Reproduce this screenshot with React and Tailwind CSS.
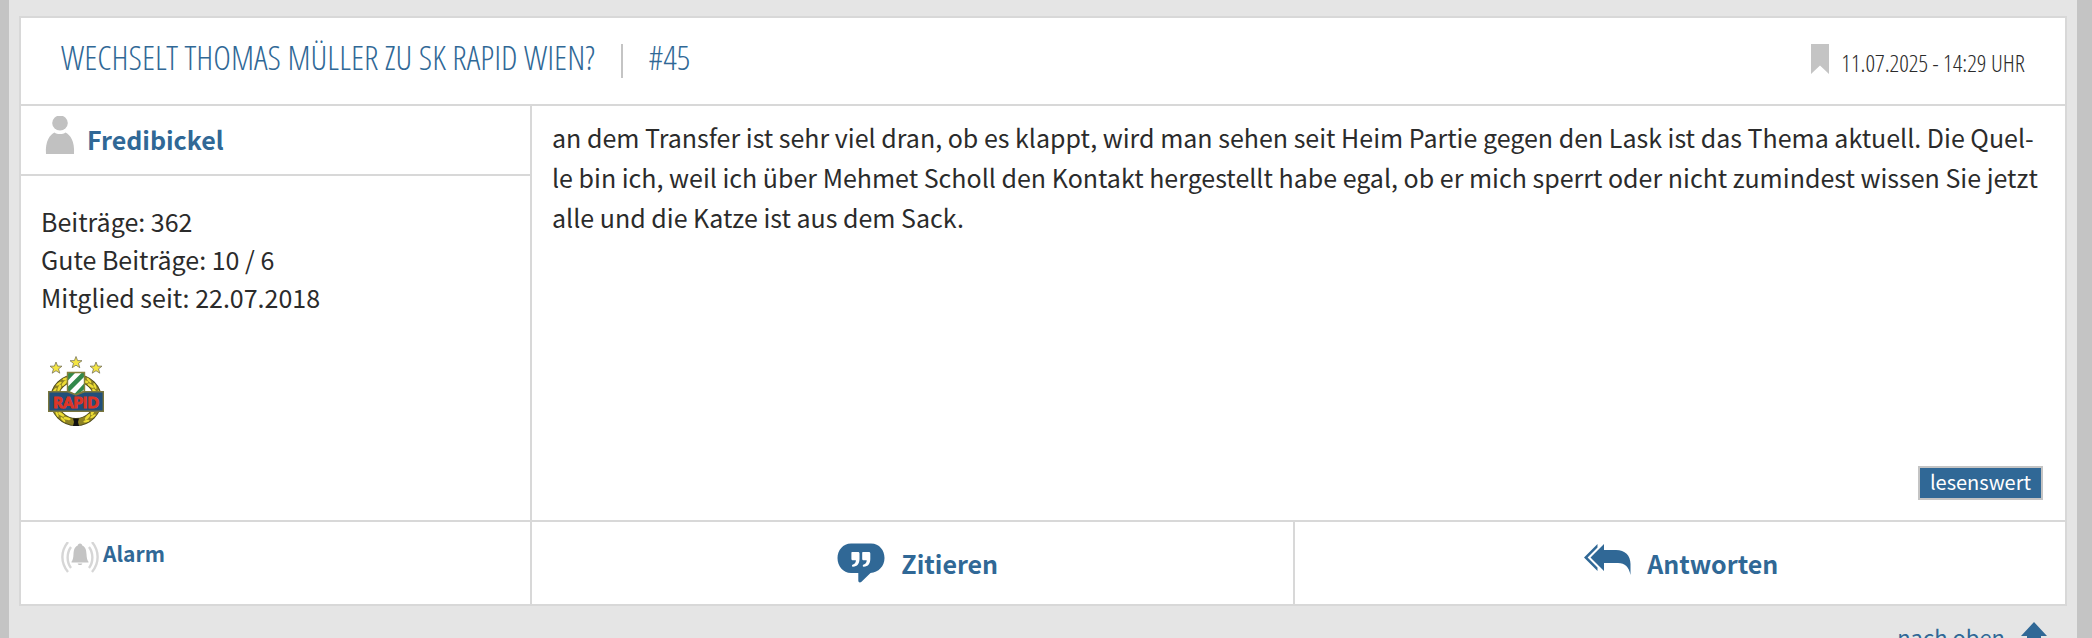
const stats = ["Beiträge: 362", "Gute Beiträge: 10 / 6", "Mitglied seit: 22.07.2018"];

const STAR = "M0 -6 L1.6 -1.9 L6 -1.8 L2.5 0.9 L3.8 5.2 L0 2.7 L-3.8 5.2 L-2.5 0.9 L-6 -1.8 L-1.6 -1.9 Z";

const leaves = [-150, -130, -110, -90, -70, -50, -30, -10, 10, 30, 50, 70, 90, 110, 130, 150];

const BookmarkIcon = () => (
  <svg className="h-[30px] w-[18px]" viewBox="0 0 18 30" aria-hidden="true">
    <path d="M0 0H18V30L9 21.500L0 30Z" fill="#c4c4c4" />
  </svg>
);

const PersonIcon = () => (
  <svg className="h-[38px] w-[30px]" viewBox="0 0 30 38" aria-hidden="true">
    <ellipse cx="15" cy="7" rx="7.800" ry="7.500" fill="#c1c1c1" />
    <path d="M1 38C0 25 5 18.500 9.500 16.500C12 18.500 18 18.500 20.500 16.500C25 18.500 30 25 29 38Z" fill="#c1c1c1" />
  </svg>
);

const AlarmIcon = () => (
  <svg className="h-[31px] w-[38px]" viewBox="0 0 38 31" fill="none" aria-hidden="true">
    <path
      d="M19 1.500C20.500 1.500 21.200 2.600 21.500 3.700C25 5 25.300 9 25.500 12C25.700 16 26.200 18 27.500 19.800V20.500H10.500V19.800C11.800 18 12.300 16 12.500 12C12.700 9 13 5 16.500 3.700C16.800 2.600 17.500 1.500 19 1.500ZM16.700 21.500H21.300C21 23.600 17 23.600 16.700 21.500Z"
      fill="#c4c4c4"
    />
    <g stroke="#d6d6d6" strokeWidth="2.400">
      <path d="M10 5C5.500 11 5.500 20 10 26" />
      <path d="M7 0C-0.500 9 -0.500 21 7 30" />
      <path d="M28 5C32.500 11 32.500 20 28 26" />
      <path d="M31 0C38.500 9 38.500 21 31 30" />
    </g>
  </svg>
);

const QuoteIcon = () => (
  <svg className="h-10 w-12" viewBox="0 0 48 40" aria-hidden="true">
    <path
      d="M14 0.500H34C42.500 0.500 47.500 7.500 47.500 15C47.500 23 41.500 29.500 33.500 30L24.500 38.800C23 40 21.300 39.500 21.300 37.500V30H14C6 30 0.500 23 0.500 15C0.500 7.500 6 0.500 14 0.500Z"
      fill="#306896"
    />
    <path
      d="M15.300 9H21C22 9 22.500 9.600 22.500 10.500V16C22.500 20.500 20.500 23.500 16 23.800C14.600 23.900 14.600 21.900 15.900 21.500C17.800 20.900 18.900 19.500 18.900 17.200H16C15 17.200 14.400 16.700 14.400 15.700V10.300C14.400 9.500 14.600 9 15.300 9Z"
      fill="#fff"
    />
    <path
      d="M26.100 9H31.800C32.800 9 33.300 9.600 33.300 10.500V16C33.300 20.500 31.300 23.500 26.800 23.800C25.400 23.900 25.400 21.900 26.700 21.500C28.600 20.900 29.700 19.500 29.700 17.200H26.800C25.800 17.200 25.200 16.700 25.200 15.700V10.300C25.200 9.500 25.400 9 26.100 9Z"
      fill="#fff"
    />
  </svg>
);

const ReplyIcon = () => (
  <svg className="mb-1.5 h-8 w-[47px]" viewBox="0 0 47 32" fill="#306896" aria-hidden="true">
    <path d="M13.500 0V3.500L3.600 13.500L13.500 23.500V27L0 13.500Z" />
    <path d="M20 0V6H32C41 6 46.500 11.500 46.500 20V31C45 23 41 19 34 19H20V27L6.500 13.500Z" />
  </svg>
);

const UpIcon = () => (
  <svg className="h-8 w-[26px]" viewBox="0 0 26 32" aria-hidden="true">
    <path d="M13 0L26 14H20V28H6V14H0Z" fill="#306896" />
  </svg>
);

const RapidLogo = () => (
  <svg className="h-[70px] w-14" viewBox="0 0 56 70" role="img" aria-label="SK Rapid Wien">
    <g fill="#f4e544" stroke="#77745a" strokeWidth="0.8">
      <path d={STAR} transform="translate(8 12)" />
      <path d={STAR} transform="translate(28 6.500)" />
      <path d={STAR} transform="translate(48 12)" />
    </g>
    <circle cx="28" cy="44" r="22" fill="none" stroke="#4f4b1c" strokeWidth="8" />
    <circle cx="28" cy="44" r="22" fill="none" stroke="#8d8223" strokeWidth="6.500" />
    <g fill="#ecdc35">
      {leaves.map((angle) => (
        <g key={angle} transform={`rotate(${angle} 28 44)`}>
          <ellipse cx="26.500" cy="23.500" rx="3.600" ry="1.400" transform="rotate(-18 26.500 23.500)" />
          <ellipse cx="29.500" cy="20.500" rx="3.200" ry="1.100" transform="rotate(18 29.500 20.500)" />
        </g>
      ))}
    </g>
    <path d="M25 62.500H31L30 66L31 70H25L26 66Z" fill="#111" />
    <path d="M19.500 16.500H36.500V35L28 39L19.500 35Z" fill="#fff" />
    <path d="M19.500 25V18L21 16.500H27.500ZM19.500 35V31L34 16.500H36.500V20.500L21 36ZM26 38.500L36.500 27V33L31 37.800L28 39Z" fill="#33894b" />
    <path d="M19.500 16.500H36.500V35L28 39L19.500 35Z" fill="none" stroke="#85803b" strokeWidth="1.400" />
    <path d="M0.700 35.700H19L28 39L37 35.700H55.300V55.300H0.700Z" fill="#214f7a" stroke="#7a763d" strokeWidth="1.400" />
    <text
      x="28"
      y="51.500"
      textAnchor="middle"
      className="fill-[#dd3526] stroke-[#dd3526] stroke-1 font-['Lato',sans-serif] text-[15px] font-black"
    >
      RAPID
    </text>
  </svg>
);

export default function App() {
  return (
    <div className="h-screen overflow-hidden border-r-[15px] border-l-[9px] border-[#c4c4c4] bg-[#e5e5e5] px-2.5 pt-4 font-['Noto_Sans_CJK_SC',sans-serif] text-[25px] text-[#2b2b2b]">
      <article className="border-2 border-[#d8d8d8] bg-white">
        <header className="flex h-[88px] items-start justify-between border-b-2 border-[#d8d8d8] px-10 font-['Open_Sans_Condensed_Light','Open_Sans_Condensed','Liberation_Sans_Narrow',sans-serif] font-light">
          <h1 className="flex items-start pt-5 text-[34px] leading-[38px] text-[#306896]">
            <a href="#thread">WECHSELT THOMAS MÜLLER ZU SK RAPID WIEN?</a>
            <span className="mx-[26px] mt-1.5 h-[34px] w-0.5 bg-[#c4c4c4]" />
            <a href="#45">#45</a>
          </h1>
          <div className="flex items-start gap-3 pt-[26px]">
            <BookmarkIcon />
            <time className="text-2xl leading-[38px]">11.07.2025 - 14:29 UHR</time>
          </div>
        </header>

        <div className="flex min-h-[414px]">
          <aside className="w-1/4 border-r-2 border-[#d8d8d8]">
            <div className="flex h-[70px] items-start gap-3 border-b-2 border-[#d8d8d8] px-6 pt-2.5">
              <PersonIcon />
              <a href="#fredibickel" className="pt-1 font-bold leading-[38px] text-[#306896]">
                Fredibickel
              </a>
            </div>
            <ul className="px-5 pt-[26px] leading-[38px]">
              {stats.map((line) => (
                <li key={line}>{line}</li>
              ))}
            </ul>
            <div className="px-[27px] pt-10">
              <RapidLogo />
            </div>
          </aside>
          <div className="flex flex-1 flex-col items-end justify-between pt-[11px] pr-[22px] pb-5 pl-5">
            <p className="w-full leading-10">
              an dem Transfer ist sehr viel dran, ob es klappt, wird man sehen seit Heim Partie gegen den
              Lask ist das Thema aktuell. Die Quel-
              <br />
              le bin ich, weil ich über Mehmet Scholl den Kontakt hergestellt habe egal, ob er mich sperrt
              oder nicht zumindest wissen Sie jetzt alle und die Katze ist aus dem Sack.
            </p>
            <button className="border-2 border-[#c4c4c4] bg-[#306896] px-2.5 pb-0.5 text-xl leading-7 text-white">
              lesenswert
            </button>
          </div>
        </div>

        <footer className="flex h-[84px] border-t-2 border-[#d8d8d8] font-bold text-[#306896]">
          <div className="w-1/4 border-r-2 border-[#d8d8d8] px-10 pt-5">
            <button className="flex gap-1 text-[21px] leading-[22px]">
              <AlarmIcon />
              Alarm
            </button>
          </div>
          <div className="flex flex-1">
            <button className="flex w-[49.8%] items-center justify-center gap-4 border-r-2 border-[#d8d8d8] pl-2.5">
              <QuoteIcon />
              <span className="pt-0.5">Zitieren</span>
            </button>
            <button className="flex flex-1 items-center justify-center gap-4 pl-0.5">
              <ReplyIcon />
              <span className="pt-0.5">Antworten</span>
            </button>
          </div>
        </footer>
      </article>

      <div className="flex justify-end px-5 pt-4">
        <a href="#top" className="flex items-start gap-4 text-[22px] leading-7 text-[#306896]">
          nach oben
          <UpIcon />
        </a>
      </div>
    </div>
  );
}
